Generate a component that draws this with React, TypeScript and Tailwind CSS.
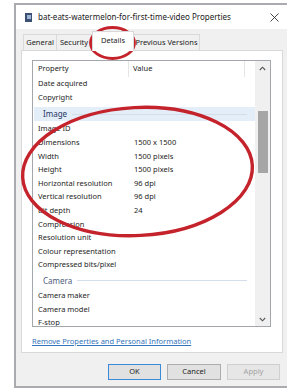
import React from "react";

const font = { fontFamily: '"Noto Sans", "Open Sans", sans-serif' };

function Row({ p, v = "", h = "h-[13.6px]" }: { p: string; v?: string; h?: string }) {
  return (
    <div className={`flex items-center ${h} text-[7.5px] leading-none text-[#1e1e1e]`}>
      <div className="w-[101px] shrink-0 pl-[5px] whitespace-nowrap">{p}</div>
      <div className="whitespace-nowrap">{v}</div>
    </div>
  );
}

function Group({ label, active }: { label: string; active?: boolean }) {
  return (
    <div className="h-[17.5px] pt-[2.5px] pb-[1px]">
      <div
        className={`flex h-[14px] items-center pl-[9px] pr-[8px] ml-px ${
          active ? "bg-[#e3eef9]" : ""
        }`}
      >
        <span
          className={`text-[8px] leading-none ${
            active ? "text-[#1f3565]" : "text-[#4d5d7c]"
          }`}
        >
          {label}
        </span>
        <div className="ml-[5px] h-px flex-1 bg-[#d3deea]" />
      </div>
    </div>
  );
}

export default function App() {
  return (
    <div
      className="relative h-[390px] w-[287px] overflow-hidden bg-white pl-[14px] pt-[3px]"
      style={font}
    >
      <div className="flex h-[385px] w-[278px] flex-col border-2 border-[#a9abae] bg-[#f0f0f0]">
        {/* Title bar */}
        <div className="flex h-[24px] shrink-0 items-center bg-white">
          <div className="ml-[9px] flex h-[9px] w-[7px] items-center justify-center bg-[#3b4f73]">
            <div className="h-[4px] w-[4px] bg-[#9fb4d6]" />
          </div>
          <span className="ml-[6px] whitespace-nowrap text-[8px] leading-none text-[#1a1a1a]">
            bat-eats-watermelon-for-first-time-video Properties
          </span>
          <svg
            className="ml-auto mr-[11px]"
            width="9"
            height="9"
            viewBox="0 0 9 9"
          >
            <path d="M0.5 0.5 L8.5 8.5 M8.5 0.5 L0.5 8.5" stroke="#333" strokeWidth="0.9" />
          </svg>
        </div>

        {/* Tabs */}
        <div className="flex h-[21px] shrink-0 items-end pl-[7px]">
          <div className="flex h-[16px] w-[34px] items-center justify-center border border-b-0 border-[#d9d9d9] bg-[#f0f0f0] text-[7.5px] leading-none text-[#222]">
            General
          </div>
          <div className="flex h-[16px] w-[35px] items-center overflow-hidden border border-b-0 border-l-0 border-[#d9d9d9] bg-[#f0f0f0] pl-[3px] text-[7.5px] leading-none text-[#222]">
            Security
          </div>
          <div className="relative z-10 -mb-px flex h-[20px] w-[42px] items-center justify-center border border-b-0 border-[#d9d9d9] bg-white pb-[2px] text-[7.5px] leading-none text-[#222]">
            Details
          </div>
          <div className="flex h-[16px] w-[66px] items-center justify-center border border-b-0 border-l-0 border-[#d9d9d9] bg-[#f0f0f0] text-[7.5px] leading-none text-[#222]">
            Previous Versions
          </div>
        </div>

        {/* Panel */}
        <div className="ml-[5px] flex h-[303px] w-[262px] shrink-0 flex-col border border-[#d9d9d9] bg-white pl-[10px] pt-[9px]">
          <div className="flex h-[267px] w-[239px] overflow-hidden border border-[#a3a6ab] bg-white">
            <div className="flex-1 overflow-hidden">
              {/* Header */}
              <div className="flex h-[16px] items-center text-[7.5px] leading-none text-[#222]">
                <div className="flex h-full w-[96px] items-center border-r border-[#e5e5e5] pl-[5px]">
                  Property
                </div>
                <div className="flex h-full w-[116px] items-center border-r border-[#e5e5e5] pl-[4px]">
                  Value
                </div>
              </div>
              <Row p="Date acquired" h="h-[14px]" />
              <Row p="Copyright" h="h-[13.5px]" />
              <Group label="Image" active />
              <Row p="Image ID" h="h-[14px]" />
              <Row p="Dimensions" v="1500 x 1500" />
              <Row p="Width" v="1500 pixels" />
              <Row p="Height" v="1500 pixels" />
              <Row p="Horizontal resolution" v="96 dpi" />
              <Row p="Vertical resolution" v="96 dpi" />
              <Row p="Bit depth" v="24" />
              <Row p="Compression" />
              <Row p="Resolution unit" />
              <Row p="Colour representation" />
              <Row p="Compressed bits/pixel" />
              <div className="h-[17.4px] pt-[2px]">
                <div className="flex h-[14px] items-center pl-[9px] pr-[8px] ml-px">
                  <span className="text-[8px] leading-none text-[#4d5d7c]">Camera</span>
                  <div className="ml-[5px] h-px flex-1 bg-[#d3deea]" />
                </div>
              </div>
              <Row p="Camera maker" />
              <Row p="Camera model" />
              <Row p="F-stop" h="h-[12.6px]" />
            </div>
            {/* Scrollbar */}
            <div className="flex w-[15px] shrink-0 flex-col items-center bg-[#f0f0f0]">
              <svg className="mt-[5px]" width="7" height="5" viewBox="0 0 7 5">
                <path d="M0.8 4 L3.5 1.2 L6.2 4" fill="none" stroke="#555" strokeWidth="1.1" />
              </svg>
              <div className="mt-[40px] h-[62px] w-[10px] bg-[#a6a6a6]" />
              <svg className="mb-[4px] mt-auto" width="7" height="5" viewBox="0 0 7 5">
                <path d="M0.8 1 L3.5 3.8 L6.2 1" fill="none" stroke="#555" strokeWidth="1.1" />
              </svg>
            </div>
          </div>
          <div className="mt-[9px] text-[7.5px] leading-[10px] text-[#3474bb] underline">
            Remove Properties and Personal Information
          </div>
        </div>

        {/* Footer */}
        <div className="flex justify-end gap-[6px] pr-[10px] pt-[11px]">
          <button className="flex h-[16px] w-[53px] items-center justify-center border border-[#3a8ad6] bg-[#e1e1e1] text-[7.5px] leading-none text-[#222]">
            OK
          </button>
          <button className="flex h-[16px] w-[54px] items-center justify-center border border-[#adadad] bg-[#e1e1e1] text-[7.5px] leading-none text-[#222]">
            Cancel
          </button>
          <button className="flex h-[16px] w-[53px] items-center justify-center border border-[#cfcfcf] bg-[#e6e6e6] text-[7.5px] leading-none text-[#a3a3a3]">
            Apply
          </button>
        </div>
      </div>

      {/* Red annotation circles */}
      <svg
        className="pointer-events-none absolute left-0 top-0"
        width="287"
        height="390"
        viewBox="0 0 287 390"
      >
        <ellipse
          cx="112.5"
          cy="43"
          rx="22"
          ry="15.5"
          fill="none"
          stroke="#c5232b"
          strokeWidth="2.8"
        />
        <ellipse
          cx="137.5"
          cy="171.5"
          rx="115"
          ry="64"
          transform="rotate(-3 137.5 171.5)"
          fill="none"
          stroke="#c5232b"
          strokeWidth="3.4"
        />
      </svg>
    </div>
  );
}
